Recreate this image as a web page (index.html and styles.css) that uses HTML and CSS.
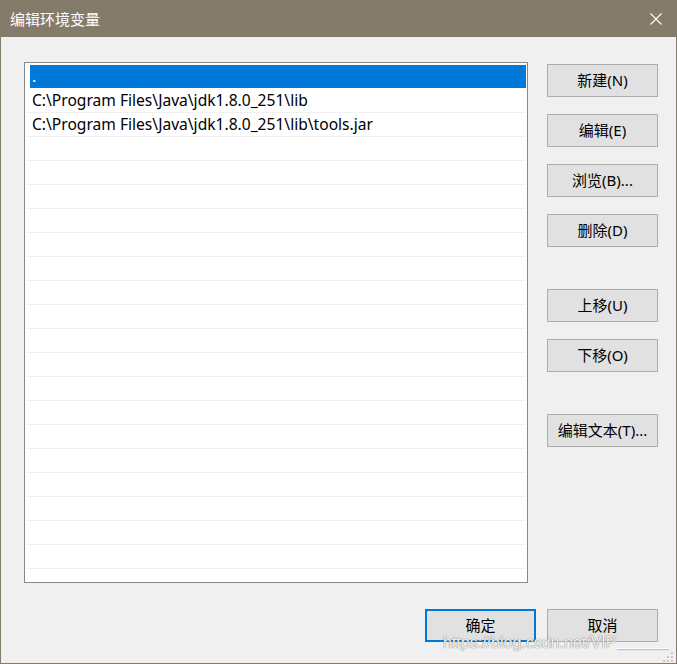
FILE: index.html
```html
<!DOCTYPE html>
<html lang="zh-CN">
<head>
<meta charset="utf-8">
<title>编辑环境变量</title>
<link rel="stylesheet" href="styles.css">
</head>
<body>
<div class="window">
  <div class="titlebar">
    <span class="title">编辑环境变量</span>
    <svg class="close" width="12" height="12" viewBox="0 0 12 12"><path d="M0.5 0.5 L11.5 11.5 M11.5 0.5 L0.5 11.5" stroke="#ffffff" stroke-width="1.1" fill="none"/></svg>
  </div>
  <div class="content">
    <div class="main">
      <div class="listbox">
        <div class="row selected"><span class="sel">.</span></div>
        <div class="row">C:\Program Files\Java\jdk1.8.0_251\lib</div>
        <div class="row">C:\Program Files\Java\jdk1.8.0_251\lib\tools.jar</div>
        <div class="row"></div><div class="row"></div><div class="row"></div>
        <div class="row"></div><div class="row"></div><div class="row"></div>
        <div class="row"></div><div class="row"></div><div class="row"></div>
        <div class="row"></div><div class="row"></div><div class="row"></div>
        <div class="row"></div><div class="row"></div><div class="row"></div>
        <div class="row"></div><div class="row"></div><div class="row"></div>
        <div class="row"></div>
      </div>
      <div class="buttons">
        <div class="group">
          <button class="btn">新建(N)</button>
          <button class="btn">编辑(E)</button>
          <button class="btn">浏览(B)...</button>
          <button class="btn">删除(D)</button>
        </div>
        <div class="group">
          <button class="btn">上移(U)</button>
          <button class="btn">下移(O)</button>
        </div>
        <div class="group">
          <button class="btn">编辑文本(T)...</button>
        </div>
      </div>
    </div>
    <div class="footer">
      <button class="btn default">确定</button>
      <button class="btn">取消</button>
    </div>
  </div>
  <div class="watermark">https://blog.csdn.net/VIP<span class="wm-line"></span></div>
  <svg class="grip" width="14" height="11" viewBox="0 0 14 11">
    <rect x="11" y="1" width="2" height="2" fill="#c8c8c8"/>
    <rect x="7" y="5" width="2" height="2" fill="#c8c8c8"/>
    <rect x="11" y="5" width="2" height="2" fill="#c8c8c8"/>
    <rect x="3" y="9" width="2" height="2" fill="#c8c8c8"/>
    <rect x="7" y="9" width="2" height="2" fill="#c8c8c8"/>
    <rect x="11" y="9" width="2" height="2" fill="#c8c8c8"/>
  </svg>
</div>
</body>
</html>
```
FILE: styles.css
```css
* { box-sizing: border-box; }
html, body { margin: 0; padding: 0; background: #f0f0f0; }
body {
  font-family: "Noto Sans", "Noto Sans CJK SC", sans-serif;
  font-size: 15px;
  color: #000;
}
.window {
  position: relative;
  width: 677px;
  height: 664px;
  background: #f0f0f0;
  border: 1px solid #857b6b;
  border-top: none;
  display: flex;
  flex-direction: column;
  overflow: hidden;
}
.titlebar {
  height: 37px;
  margin: 0 -1px;
  background: #857b6b;
  display: flex;
  align-items: center;
  justify-content: space-between;
  padding: 0 15px 0 10px;
  flex-shrink: 0;
}
.title {
  color: #ffffff;
  font-family: "Noto Sans CJK SC", sans-serif;
  font-size: 15px;
  line-height: 18px;
}
.close { display: block; }
.content {
  padding: 25px 18px 0 23px;
  display: flex;
  flex-direction: column;
}
.main {
  display: flex;
  gap: 19px;
}
.listbox {
  width: 504px;
  height: 521px;
  border: 1px solid #828790;
  background: #ffffff;
  padding: 2px 0 0 1px;
  overflow: hidden;
}
.row {
  height: 24px;
  border-bottom: 1px solid #f0f0f0;
  padding-left: 6px;
  line-height: 23px;
  font-size: 15.6px;
  white-space: nowrap;
  margin-right: 1px;
}
.row.selected {
  margin-left: 4px;
  margin-right: 1px;
  padding-left: 2px;
  background: #0078d7;
  color: #ffffff;
  border-bottom-color: #ffffff;
}
.buttons {
  display: flex;
  flex-direction: column;
  gap: 42px;
  padding-top: 2px;
}
.group {
  display: flex;
  flex-direction: column;
  gap: 17px;
}
.btn {
  width: 111px;
  height: 33px;
  background: #e1e1e1;
  border: 1px solid #adadad;
  font-family: "Noto Sans", "Noto Sans CJK SC", sans-serif;
  font-size: 15px;
  line-height: 18px;
  color: #000;
  padding: 0 0 2px 0;
  margin: 0;
  display: flex;
  align-items: center;
  justify-content: center;
}
.footer {
  margin-top: 26px;
  display: flex;
  justify-content: flex-end;
  gap: 11px;
}
.btn.default {
  border: 2px solid #0078d7;
}
.watermark {
  position: absolute;
  left: 442px;
  top: 633px;
  font-family: "Liberation Sans", sans-serif;
  font-size: 16px;
  line-height: 19px;
  color: rgba(255, 255, 255, 0.9);
  text-shadow: 0 0 1px rgba(110, 110, 110, 0.9), 0 0 1px rgba(110, 110, 110, 0.6);
  display: flex;
  align-items: flex-end;
  white-space: nowrap;
}
.wm-line {
  display: inline-block;
  width: 52px;
  height: 1px;
  margin-left: 1px;
  margin-bottom: 3px;
  background: rgba(255, 255, 255, 0.95);
  box-shadow: 0 1px 1px rgba(140, 140, 140, 0.6);
}
.grip {
  position: absolute;
  right: 2px;
  bottom: 1px;
}
```
